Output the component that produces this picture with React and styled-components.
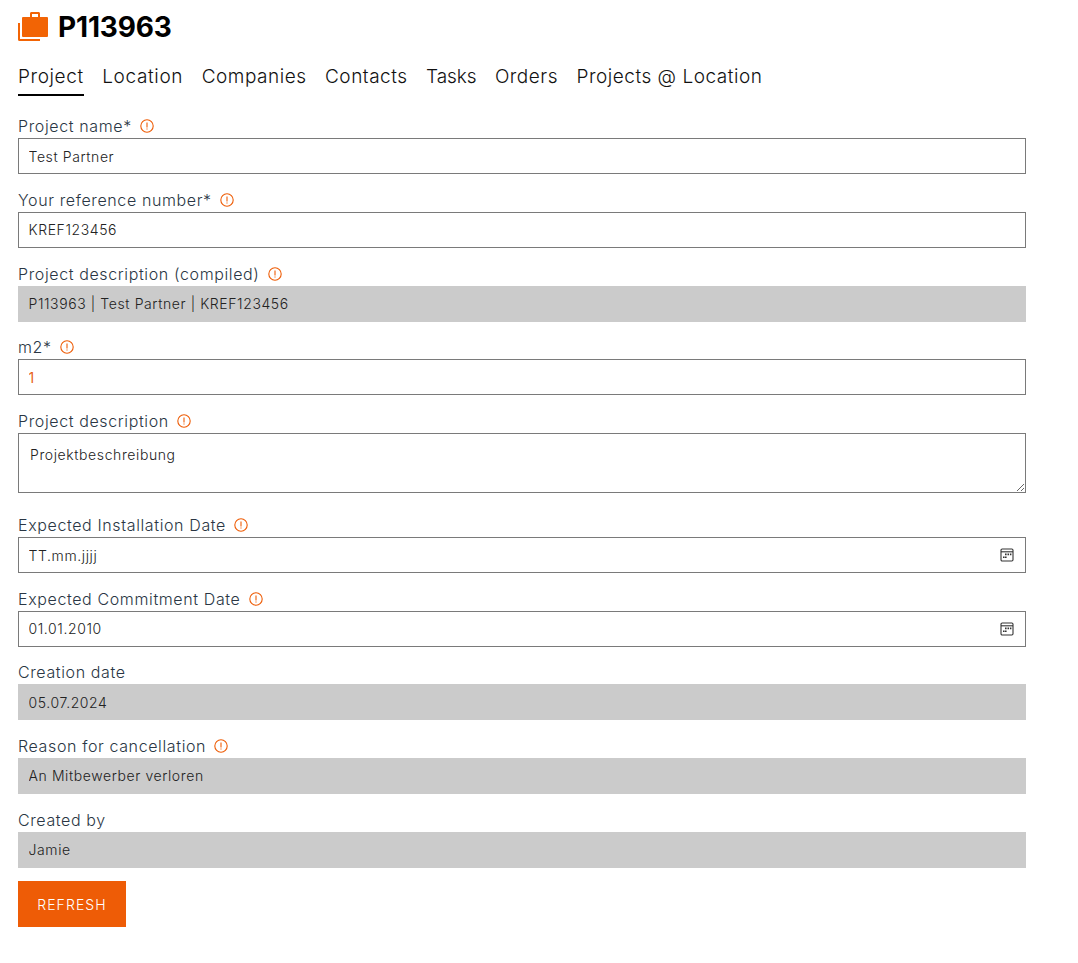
import React from "react";
import styled, { createGlobalStyle } from "styled-components";

const Global = createGlobalStyle`
  html, body { margin: 0; padding: 0; background: #fff; }
  body { font-family: Inter, "Liberation Sans", sans-serif; color: #222; }
  * { box-sizing: border-box; }
`;
const Page = styled.div`
  width: 1008px;
  margin-left: 18px;
  padding-top: 9px;
  height: 963px;
`;
const Title = styled.h1`
  display: flex;
  align-items: center;
  gap: 10px;
  margin: 0;
  height: 36px;
  font-size: 28px;
  font-weight: 700;
  letter-spacing: -0.15px;
  color: #000;
`;
const Tabs = styled.nav`
  display: flex;
  gap: 18.5px;
  margin-top: 13px;
  height: 38px;
`;
const Tab = styled.a`
  display: block;
  height: 38px;
  padding-top: 6px;
  font-size: 19px;
  font-weight: 300;
  line-height: 25px;
  letter-spacing: ${(p) => p.$spacing}px;
  color: #111;
  border-bottom: ${(p) => (p.$active ? "2px solid #000" : "none")};
`;
const Form = styled.form`
  margin-top: 20.4px;
`;
const Field = styled.div`
  margin-bottom: ${(p) => (p.$area ? "22.4px" : "15.6px")};
`;
const Label = styled.label`
  display: flex;
  align-items: center;
  gap: 8px;
  height: 22px;
  padding-bottom: 2px;
  font-size: 16px;
  font-weight: 300;
  letter-spacing: 0.62px;
  color: #2a3644;
`;
const InputBox = styled.div`
  position: relative;
  height: 36px;
`;
const Input = styled.input`
  display: block;
  width: 100%;
  height: 36px;
  padding: 0 ${(p) => (p.readOnly ? "10.5px" : "9.5px")};
  border: ${(p) => (p.readOnly ? "none" : "1px solid #7a7a7a")};
  border-radius: 0;
  background: ${(p) => (p.readOnly ? "#cbcbcb" : "#fff")};
  font-family: inherit;
  font-size: 14px;
  font-weight: ${(p) => (p.$color ? 400 : 300)};
  letter-spacing: 0.6px;
  color: ${(p) => p.$color || "#222"};
  outline: none;
`;
const Area = styled.textarea`
  display: block;
  width: 100%;
  height: 60px;
  padding: 12px 11px;
  border: 1px solid #7a7a7a;
  border-radius: 0;
  font-family: inherit;
  font-size: 14px;
  font-weight: 300;
  letter-spacing: 0.6px;
  color: #222;
  outline: none;
`;
const CalIcon = styled.svg`
  position: absolute;
  right: 12px;
  top: 11px;
  width: 14px;
  height: 14px;
`;
const Refresh = styled.button`
  display: block;
  width: 108px;
  height: 46px;
  margin-top: -2.2px;
  padding: 2px 0 0;
  border: none;
  border-radius: 0;
  background: #ee5c06;
  color: #fff;
  font-family: inherit;
  font-size: 14px;
  font-weight: 300;
  letter-spacing: 1.1px;
`;

const Case = () => (
  <svg width="30" height="30" viewBox="0 0 30 30">
    <path fillRule="evenodd" d="M12 5V1.5C12 .6 12.6 0 13.5 0h7c.9 0 1.5.6 1.5 1.5V5h-2V2h-6v3z" fill="#f26405" />
    <rect x="4" y="5" width="26" height="20" rx="1" fill="#f26405" />
    <path d="M1 11v16.5c0 .4.1.5.5.5H22" fill="none" stroke="#f26405" strokeWidth="2" />
  </svg>
);
const Info = () => (
  <svg width="14" height="14" viewBox="0 0 14 14">
    <circle cx="7" cy="7" r="6.2" fill="none" stroke="#ee5c06" strokeWidth="1.1" />
    <path d="M7 3.5v5M7 9.6v1" stroke="#ee5c06" strokeWidth="1.1" />
  </svg>
);
const Calendar = () => (
  <CalIcon viewBox="0 0 14 14">
    <rect x="1" y="1" width="12" height="12" rx="1.2" fill="none" stroke="#333" strokeWidth="1.1" />
    <path d="M1 3.8h12" stroke="#333" strokeWidth="1.1" />
    <path d="M5 5.6h1.6v1.6H5zM7.5 5.6h1.6v1.6H7.5zM10 5.6h1.4v1.6H10zM3 8.4h1.6V10H3zM5 8.4h1.6V10H5z" fill="#333" />
  </CalIcon>
);

const tabs = [
  { name: "Project", spacing: 0.6 },
  { name: "Location", spacing: 0.65 },
  { name: "Companies", spacing: 0.52 },
  { name: "Contacts", spacing: 0.52 },
  { name: "Tasks", spacing: -0.1 },
  { name: "Orders", spacing: 0.52 },
  { name: "Projects @ Location", spacing: 0.52 },
];
const fields = [
  { label: "Project name*", value: "Test Partner", info: true },
  { label: "Your reference number*", value: "KREF123456", info: true },
  { label: "Project description (compiled)", value: "P113963 | Test Partner | KREF123456", info: true, ro: true },
  { label: "m2*", value: "1", info: true, color: "#e8641a" },
  { label: "Project description", value: "Projektbeschreibung", info: true, area: true },
  { label: "Expected Installation Date", value: "TT.mm.jjjj", info: true, date: true },
  { label: "Expected Commitment Date", value: "01.01.2010", info: true, date: true },
  { label: "Creation date", value: "05.07.2024", ro: true },
  { label: "Reason for cancellation", value: "An Mitbewerber verloren", info: true, ro: true },
  { label: "Created by", value: "Jamie", ro: true },
];

export default function App() {
  return (
    <Page>
      <Global />
      <Title><Case />P113963</Title>
      <Tabs>
        {tabs.map((t, i) => <Tab key={t.name} $active={i === 0} $spacing={t.spacing}>{t.name}</Tab>)}
      </Tabs>
      <Form>
        {fields.map((f) => (
          <Field key={f.label} $area={f.area}>
            <Label>{f.label}{f.info && <Info />}</Label>
            {f.area ? (
              <Area defaultValue={f.value} />
            ) : (
              <InputBox>
                <Input readOnly={f.ro} defaultValue={f.value} $color={f.color} />
                {f.date && <Calendar />}
              </InputBox>
            )}
          </Field>
        ))}
        <Refresh type="button">REFRESH</Refresh>
      </Form>
    </Page>
  );
}
